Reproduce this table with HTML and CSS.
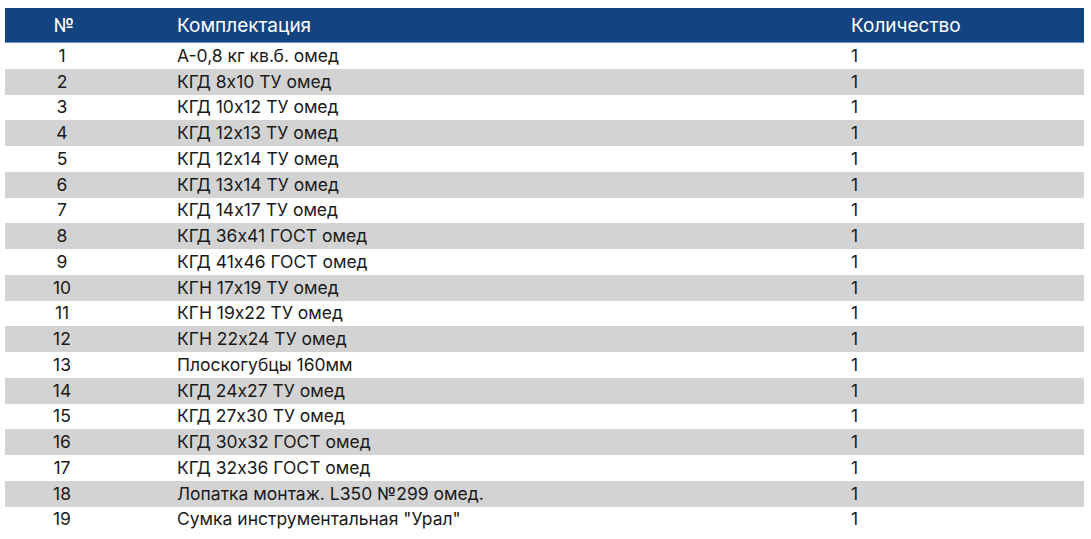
FILE: index.html
```html
<!DOCTYPE html>
<html lang="ru">
<head>
<meta charset="utf-8">
<link rel="stylesheet" href="styles.css">
</head>
<body>
<table class="kit">
  <colgroup>
    <col class="c-num">
    <col class="c-name">
    <col class="c-qty">
  </colgroup>
  <thead>
    <tr><th class="num">№</th><th>Комплектация</th><th>Количество</th></tr>
  </thead>
  <tbody>
    <tr><td class="num">1</td><td>А-0,8 кг кв.б. омед</td><td>1</td></tr>
    <tr><td class="num">2</td><td>КГД 8x10 ТУ омед</td><td>1</td></tr>
    <tr><td class="num">3</td><td>КГД 10x12 ТУ омед</td><td>1</td></tr>
    <tr><td class="num">4</td><td>КГД 12x13 ТУ омед</td><td>1</td></tr>
    <tr><td class="num">5</td><td>КГД 12x14 ТУ омед</td><td>1</td></tr>
    <tr><td class="num">6</td><td>КГД 13x14 ТУ омед</td><td>1</td></tr>
    <tr><td class="num">7</td><td>КГД 14x17 ТУ омед</td><td>1</td></tr>
    <tr><td class="num">8</td><td>КГД 36x41 ГОСТ омед</td><td>1</td></tr>
    <tr><td class="num">9</td><td>КГД 41x46 ГОСТ омед</td><td>1</td></tr>
    <tr><td class="num">10</td><td>КГН 17x19 ТУ омед</td><td>1</td></tr>
    <tr><td class="num">11</td><td>КГН 19x22 ТУ омед</td><td>1</td></tr>
    <tr><td class="num">12</td><td>КГН 22x24 ТУ омед</td><td>1</td></tr>
    <tr><td class="num">13</td><td>Плоскогубцы 160мм</td><td>1</td></tr>
    <tr><td class="num">14</td><td>КГД 24x27 ТУ омед</td><td>1</td></tr>
    <tr><td class="num">15</td><td>КГД 27x30 ТУ омед</td><td>1</td></tr>
    <tr><td class="num">16</td><td>КГД 30x32 ГОСТ омед</td><td>1</td></tr>
    <tr><td class="num">17</td><td>КГД 32x36 ГОСТ омед</td><td>1</td></tr>
    <tr><td class="num">18</td><td>Лопатка монтаж. L350 №299 омед.</td><td>1</td></tr>
    <tr><td class="num">19</td><td>Сумка инструментальная "Урал"</td><td>1</td></tr>
  </tbody>
</table>
</body>
</html>
```
FILE: styles.css
```css
html, body {
  margin: 0;
  padding: 0;
  background: #ffffff;
}
body {
  padding: 8px 0 0 5px;
  font-family: Inter, "Noto Sans", "Liberation Sans", sans-serif;
  color: #1a1a1a;
}
.kit {
  border-collapse: collapse;
  width: 1079px;
  table-layout: fixed;
  font-size: 17.5px;
}
.c-num { width: 114px; }
.c-name { width: 732px; }
.kit th {
  background: #114481;
  color: #ffffff;
  font-weight: 400;
  text-align: left;
  height: 34px;
  padding: 0;
  border-bottom: 1px solid #6f8fbb;
  font-size: 19px;
}
.kit th:nth-child(2), .kit td:nth-child(2) { padding-left: 58px; }
.kit th:nth-child(3), .kit td:nth-child(3) { padding-left: 0; }
.kit .num { text-align: center; }
.kit th.num { text-align: center; padding-left: 4px; }
.kit td {
  height: 25.75px;
  padding: 0;
  line-height: 20px;
  vertical-align: middle;
}
.kit tbody tr:nth-child(even) td { background: #d3d3d3; }
```
